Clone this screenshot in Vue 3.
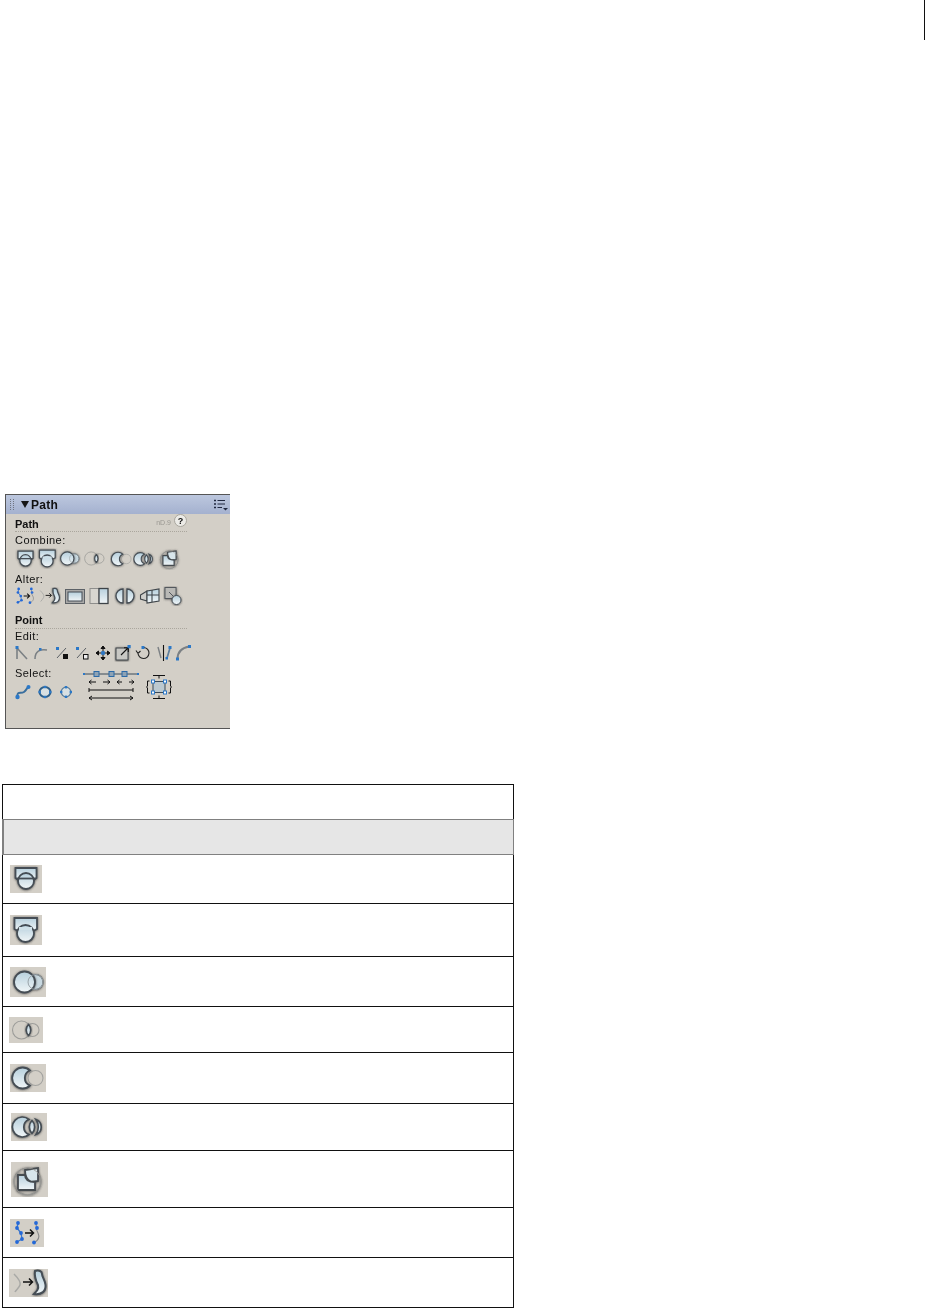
<script setup>
// icon centres measured from the panel
const PANEL_LEFT = 6

const combine = [
  { id: 's1', c: 25, w: 23, h: 20 },
  { id: 's2', c: 47, w: 23, h: 21 },
  { id: 's3', c: 69, w: 23, h: 19 },
  { id: 's4', c: 94, w: 25, h: 19 },
  { id: 's5', c: 121, w: 23, h: 18 },
  { id: 's6', c: 144, w: 23, h: 18 },
  { id: 's7', c: 170, w: 25, h: 23 }
]
const alter = [
  { id: 's8', c: 25, w: 24, h: 20 },
  { id: 's9', c: 49, w: 24, h: 18 },
  { id: 'a3', c: 75, w: 22, h: 17 },
  { id: 'a4', c: 99, w: 22, h: 18 },
  { id: 'a5', c: 125, w: 22, h: 20 },
  { id: 'a6', c: 150, w: 22, h: 18 },
  { id: 'a7', c: 173, w: 20, h: 20 }
]
const edit = [
  { id: 'e1', c: 22, w: 16, h: 16 },
  { id: 'e2', c: 41, w: 16, h: 16 },
  { id: 'e3', c: 62, w: 16, h: 16 },
  { id: 'e4', c: 82, w: 16, h: 16 },
  { id: 'e5', c: 103, w: 16, h: 16 },
  { id: 'e6', c: 123, w: 18, h: 18 },
  { id: 'e7', c: 143, w: 16, h: 16 },
  { id: 'e8', c: 164, w: 16, h: 16 },
  { id: 'e9', c: 183, w: 18, h: 18 }
]
const select = [
  { id: 'p1', c: 23, w: 18, h: 16 },
  { id: 'p2', c: 45, w: 16, h: 16 },
  { id: 'p3', c: 66, w: 16, h: 16 }
]

function spaced(list) {
  let right = PANEL_LEFT
  return list.map((icon) => {
    const left = icon.c - icon.w / 2
    const item = { ...icon, ml: left - right }
    right = left + icon.w
    return item
  })
}

const rows = [
  { h: 49, id: 's1', x: 10, w: 32, h2: 28 },
  { h: 53, id: 's2', x: 10, w: 32, h2: 30 },
  { h: 50, id: 's3', x: 10, w: 36, h2: 30 },
  { h: 46, id: 's4', x: 9, w: 34, h2: 26 },
  { h: 51, id: 's5', x: 10, w: 36, h2: 28 },
  { h: 47, id: 's6', x: 11, w: 36, h2: 28 },
  { h: 57, id: 's7', x: 11, w: 37, h2: 35 },
  { h: 50, id: 's8', x: 10, w: 34, h2: 28 },
  { h: 50, id: 's9', x: 9, w: 39, h2: 28 }
]
</script>

<template>
  <div class="page">
    <div class="page-mark"></div>

    <svg class="defs" aria-hidden="true">
      <defs>
        <linearGradient id="glass" x1="0" y1="0" x2="0" y2="1">
          <stop offset="0" stop-color="#b7d0dd" />
          <stop offset="1" stop-color="#f1f6f8" />
        </linearGradient>
        <filter id="soft" x="-30%" y="-30%" width="160%" height="160%">
          <feDropShadow dx="0" dy="0.4" stdDeviation="1.3" flood-color="#3a3a3a" flood-opacity="0.85" />
        </filter>
      </defs>

      <symbol id="s1" viewBox="0 0 32 28">
        <g filter="url(#soft)" stroke="#454d54" stroke-width="1.8" fill="url(#glass)">
          <path d="M5.5 3H26.5V13L23.5 15H8.5L5.5 13Z" />
          <circle cx="16" cy="16" r="8" />
          <path d="M6 13.5H26" fill="none" />
        </g>
      </symbol>
      <symbol id="s2" viewBox="0 0 32 30">
        <g filter="url(#soft)" stroke="#454d54" stroke-width="1.8" fill="url(#glass)">
          <path d="M4.5 3H27V14L23 16H8L4.5 14Z" />
          <circle cx="15.5" cy="18.5" r="8.5" />
        </g>
        <path d="M9 12H22V15H9Z" fill="#cfe0e8" />
      </symbol>
      <symbol id="s3" viewBox="0 0 36 30">
        <circle cx="25.5" cy="15" r="7.5" fill="#c8d8e0" stroke="#555c62" stroke-width="1.2" filter="url(#soft)" />
        <circle cx="14.5" cy="15" r="10.5" fill="url(#glass)" stroke="#454d54" stroke-width="1.8" filter="url(#soft)" />
        <circle cx="25.5" cy="15" r="7.5" fill="none" stroke="#9aa3a8" stroke-width="1" />
      </symbol>
      <symbol id="s4" viewBox="0 0 34 26">
        <circle cx="12.5" cy="13" r="9" fill="none" stroke="#9d9d9a" stroke-width="1.1" />
        <circle cx="23.5" cy="13" r="6.5" fill="none" stroke="#9d9d9a" stroke-width="1.1" />
        <path d="M19.5 7.5C16.5 10.5 16.5 15.5 19.5 18.5C22.5 15.5 22.5 10.5 19.5 7.5Z" fill="url(#glass)" stroke="#454d54" stroke-width="1.6" filter="url(#soft)" />
      </symbol>
      <symbol id="s5" viewBox="0 0 36 28">
        <circle cx="25.5" cy="14" r="7.5" fill="none" stroke="#a3a3a0" stroke-width="1.1" />
        <path d="M20 6.5A10.5 10.5 0 1 0 20 21.5A8 8 0 0 1 20 6.5Z" fill="url(#glass)" stroke="#454d54" stroke-width="1.8" filter="url(#soft)" />
      </symbol>
      <symbol id="s6" viewBox="0 0 36 28">
        <g fill="url(#glass)" stroke="#454d54" stroke-width="1.7" filter="url(#soft)">
          <path d="M18 6.5A10 10 0 1 0 18 21.5A8 8 0 0 1 18 6.5Z" />
          <path d="M21 7.5C17.5 11 17.5 17 21 20.5C24.5 17 24.5 11 21 7.5Z" />
          <path d="M25 6.5A8 8 0 0 1 25 21.5C28 17 28 11 25 6.5Z" />
        </g>
      </symbol>
      <symbol id="s7" viewBox="0 0 37 35">
        <circle cx="16.5" cy="19.5" r="13.5" fill="none" stroke="#8f8f8c" stroke-width="1.2" filter="url(#soft)" />
        <g stroke="#454b50" stroke-width="1.8" filter="url(#soft)">
          <path d="M14 8L27 6V19L20 20C16 18 14 14 14 8Z" fill="#d8e6ec" />
          <path d="M7 13H14C14 17 17 20 24 20V28H7Z" fill="url(#glass)" />
        </g>
        <circle cx="16.5" cy="19.5" r="13.5" fill="none" stroke="#9a9a97" stroke-width="0.8" />
      </symbol>
      <symbol id="s8" viewBox="0 0 34 28">
        <path d="M8 4L7 9L11 14L12 20L7 23" fill="none" stroke="#3f78c8" stroke-width="1.3" />
        <path d="M26 4C27 8 25 10 28 14C30 18 29 21 24 24" fill="none" stroke="#8a8a8a" stroke-width="1.1" />
        <g fill="#2368d8">
          <circle cx="8" cy="4" r="1.9" /><circle cx="7" cy="9" r="1.9" /><circle cx="11" cy="14" r="1.9" />
          <circle cx="12" cy="20" r="1.9" /><circle cx="7" cy="23" r="1.9" />
          <circle cx="26" cy="4" r="1.9" /><circle cx="27" cy="9" r="1.9" /><circle cx="24" cy="23.5" r="1.9" />
        </g>
        <path d="M15 14H23M20 10.5L23.5 14L20 17.5" fill="none" stroke="#111" stroke-width="1.5" />
      </symbol>
      <symbol id="s9" viewBox="0 0 39 28">
        <path d="M5 5C10 10 12 13 11 16C10 19 7 21 6 23" fill="none" stroke="#a9a9a6" stroke-width="1.5" />
        <path d="M14 13H23M20 9.5L23.5 13L20 16.5" fill="none" stroke="#111" stroke-width="1.5" />
        <path d="M26 2C30 1 33 2 33 5C33 8 36 11 36.5 16C37 22 33 26 25 25C28 22 30 20 29 16C27 12 25 8 26 2Z" fill="url(#glass)" stroke="#454d54" stroke-width="2" filter="url(#soft)" />
      </symbol>

      <symbol id="a3" viewBox="0 0 22 17">
        <rect x="1.5" y="1.5" width="19" height="14" fill="#a9a9a8" stroke="#5c6166" />
        <rect x="4" y="4" width="14" height="9" fill="url(#glass)" stroke="#454d54" />
      </symbol>
      <symbol id="a4" viewBox="0 0 22 18">
        <rect x="2" y="1.5" width="9" height="15" fill="#d8d6d0" stroke="#8e8e8c" />
        <rect x="11" y="1.5" width="9" height="15" fill="url(#glass)" stroke="#3d4348" stroke-width="1.3" />
      </symbol>
      <symbol id="a5" viewBox="0 0 22 20">
        <g fill="url(#glass)" stroke="#454d54" stroke-width="1.3" filter="url(#soft)">
          <path d="M9 3A7 7 0 0 0 9 17Z" />
          <path d="M13 3A7 7 0 0 1 13 17Z" />
        </g>
      </symbol>
      <symbol id="a6" viewBox="0 0 22 18">
        <g fill="url(#glass)" stroke="#3f454a" stroke-width="1.1">
          <path d="M1.5 8L8 4V14L1.5 12Z" fill="#cfcfcc" />
          <path d="M8 4L20 2V14L8 16Z" />
          <path d="M8 8H20M13 3V15" fill="none" />
        </g>
      </symbol>
      <symbol id="a7" viewBox="0 0 20 20">
        <rect x="2" y="1.5" width="11" height="11" fill="#b9b9b6" stroke="#53585d" filter="url(#soft)" />
        <path d="M6 6L12 12" stroke="#53585d" />
        <circle cx="13.5" cy="14" r="4.5" fill="url(#glass)" stroke="#454d54" filter="url(#soft)" />
      </symbol>

      <symbol id="e1" viewBox="0 0 16 16">
        <path d="M3 14V3L13 14" fill="none" stroke="#7b8084" stroke-width="1.6" />
        <rect x="1.5" y="1" width="3" height="3" fill="#2b78c8" />
      </symbol>
      <symbol id="e2" viewBox="0 0 16 16">
        <path d="M2 14C2 6 7 4 14 5" fill="none" stroke="#7b8084" stroke-width="1.6" />
        <rect x="6" y="3" width="2.5" height="2.5" fill="#2b78c8" />
      </symbol>
      <symbol id="e3" viewBox="0 0 16 16">
        <path d="M3 13L12 3" stroke="#5b6065" stroke-width="1" />
        <rect x="2" y="2" width="3" height="3" fill="#2b78c8" />
        <rect x="9" y="9" width="5" height="5" fill="#111" />
      </symbol>
      <symbol id="e4" viewBox="0 0 16 16">
        <path d="M3 13L12 3" stroke="#5b6065" stroke-width="1" />
        <rect x="2" y="2" width="3" height="3" fill="#2b78c8" />
        <rect x="9.5" y="9.5" width="4.5" height="4.5" fill="#eee" stroke="#111" />
      </symbol>
      <symbol id="e5" viewBox="0 0 16 16">
        <path d="M8 1V15M1 8H15M8 1L6 3.5H10ZM8 15L6 12.5H10ZM1 8L3.5 6V10ZM15 8L12.5 6V10Z" stroke="#111" fill="#111" stroke-width="1" />
        <rect x="6.2" y="6.2" width="3.6" height="3.6" fill="#2b78c8" />
      </symbol>
      <symbol id="e6" viewBox="0 0 18 18">
        <rect x="2" y="4" width="12" height="12" fill="#c8c8c4" stroke="#3f4448" filter="url(#soft)" />
        <path d="M7 11L14 4M10 3.8H14.3V8" fill="none" stroke="#111" stroke-width="1.1" />
        <rect x="13.5" y="1" width="3.2" height="3.2" fill="#2b78c8" />
      </symbol>
      <symbol id="e7" viewBox="0 0 16 16">
        <path d="M9 2.5A5.5 5.5 0 1 1 3 8M1 5.5L3 8.5L5.5 6" fill="none" stroke="#222" stroke-width="1.1" />
        <rect x="6.5" y="1" width="3" height="3" fill="#2b78c8" />
      </symbol>
      <symbol id="e8" viewBox="0 0 16 16">
        <path d="M2 2L5 13" stroke="#7b8084" stroke-width="1.4" />
        <path d="M7.5 0V16" stroke="#111" stroke-width="1.1" />
        <path d="M11 13L14 3" stroke="#5f7e9c" stroke-width="1.7" />
        <rect x="12.5" y="1" width="3" height="3" fill="#2b78c8" />
        <rect x="9.5" y="12" width="2.5" height="2.5" fill="#2b78c8" />
      </symbol>
      <symbol id="e9" viewBox="0 0 18 18">
        <path d="M3.5 15C3.5 8 7 4 15 2.5" fill="none" stroke="#7b8084" stroke-width="1.9" />
        <rect x="2" y="13.5" width="3" height="3" fill="#2b78c8" />
        <rect x="14" y="1" width="3" height="3" fill="#2b78c8" />
      </symbol>

      <symbol id="p1" viewBox="0 0 18 16">
        <path d="M3.5 12C3 7 7 10 10 8C13 6 12 4 15 3" fill="none" stroke="#3a6f9e" stroke-width="2" />
        <circle cx="3.5" cy="13" r="2.2" fill="#2b78c8" />
        <circle cx="14.5" cy="3" r="2" fill="#2b78c8" />
      </symbol>
      <symbol id="p2" viewBox="0 0 16 16">
        <ellipse cx="8" cy="8" rx="5.5" ry="5" fill="#d8e0e2" stroke="#2f5f88" stroke-width="2" />
        <g fill="#2b78c8">
          <rect x="6.8" y="1.8" width="2.4" height="2.4" /><rect x="6.8" y="11.8" width="2.4" height="2.4" />
          <rect x="1.5" y="6.8" width="2.4" height="2.4" /><rect x="12" y="6.8" width="2.4" height="2.4" />
        </g>
      </symbol>
      <symbol id="p3" viewBox="0 0 16 16">
        <circle cx="8" cy="8" r="4.8" fill="#d8e0e2" stroke="#5b7d98" stroke-width="1.3" />
        <g fill="#2b78c8">
          <rect x="6.8" y="2" width="2.4" height="2.4" /><rect x="6.8" y="11.6" width="2.4" height="2.4" />
          <rect x="2" y="6.8" width="2.4" height="2.4" /><rect x="11.6" y="6.8" width="2.4" height="2.4" />
        </g>
      </symbol>
    </svg>

    <section class="panel">
      <header class="panel-head">
        <svg class="grip" width="5" height="12" viewBox="0 0 5 12">
          <path d="M0.5 0V12M3.5 0V12" stroke="#6f7480" stroke-width="1" stroke-dasharray="1 1" />
        </svg>
        <span class="tri"></span>
        <span class="head-title">Path</span>
        <svg class="menu" width="14" height="12" viewBox="0 0 14 12">
          <path d="M0 1.5H2M0 5H2M0 8.5H2" stroke="#202840" stroke-width="1.4" />
          <path d="M3.5 1.5H11M3.5 5H11M3.5 8.5H8" stroke="#202840" stroke-width="1" />
          <path d="M9 9H14L11.5 11.5Z" fill="#202840" />
        </svg>
      </header>

      <div class="title-row title-path">
        <span class="title">Path</span>
        <span class="version">nD.9</span>
        <span class="help">?</span>
      </div>

      <div class="label label-combine">Combine:</div>
      <div class="icons icons-combine">
        <svg v-for="i in spaced(combine)" :key="i.id" :width="i.w" :height="i.h" :style="{ marginLeft: i.ml + 'px' }"><use :href="'#' + i.id" /></svg>
      </div>

      <div class="label label-alter">Alter:</div>
      <div class="icons icons-alter">
        <svg v-for="i in spaced(alter)" :key="i.id" :width="i.w" :height="i.h" :style="{ marginLeft: i.ml + 'px' }"><use :href="'#' + i.id" /></svg>
      </div>

      <div class="title-row title-point">
        <span class="title">Point</span>
      </div>

      <div class="label">Edit:</div>
      <div class="icons icons-edit">
        <svg v-for="i in spaced(edit)" :key="i.id" :width="i.w" :height="i.h" :style="{ marginLeft: i.ml + 'px' }"><use :href="'#' + i.id" /></svg>
      </div>

      <div class="select-row">
        <div class="select-col">
          <div class="label label-select">Select:</div>
          <div class="icons icons-select">
            <svg v-for="i in spaced(select)" :key="i.id" :width="i.w" :height="i.h" :style="{ marginLeft: i.ml + 'px' }"><use :href="'#' + i.id" /></svg>
          </div>
        </div>

        <svg class="spacing" width="56" height="30" viewBox="0 0 56 30">
          <path d="M1 3H55" stroke="#3a4a58" stroke-width="1" />
          <g fill="#8fa3b4" stroke="#2b6aa8">
            <rect x="11" y="0.5" width="5" height="5" /><rect x="26" y="0.5" width="5" height="5" /><rect x="39" y="0.5" width="5" height="5" />
          </g>
          <g fill="#2b78c8">
            <rect x="0" y="2" width="2" height="2" /><rect x="54" y="2" width="2" height="2" />
          </g>
          <path d="M6 11H13M6 11L8.5 9M6 11L8.5 13M20 11H27M27 11L24.5 9M27 11L24.5 13M34 11H39M34 11L36.5 9M34 11L36.5 13M46 11H51M51 11L48.5 9M51 11L48.5 13" fill="none" stroke="#111" stroke-width="1" />
          <path d="M6 19H50M6 17V21M50 17V21" fill="none" stroke="#111" stroke-width="1" />
          <path d="M6 27H50M6 27L9 25M6 27L9 29M50 27L47 25M50 27L47 29" fill="none" stroke="#111" stroke-width="1" />
        </svg>

        <svg class="bracket" width="26" height="24" viewBox="0 0 26 24">
          <path d="M3.5 6H1.5V11L0.5 12L1.5 13V18H3.5M22.5 6H24.5V11L25.5 12L24.5 13V18H22.5M7 0.5H19M13 0.5V3.5M7 23.5H19M13 23.5V20.5" fill="none" stroke="#111" stroke-width="1" />
          <rect x="7" y="6.5" width="12" height="11" fill="#bcc9d0" stroke="#3a4a58" />
          <g fill="#fff" stroke="#2b78c8">
            <rect x="5.5" y="5" width="3" height="3" /><rect x="17.5" y="5" width="3" height="3" />
            <rect x="5.5" y="16" width="3" height="3" /><rect x="17.5" y="16" width="3" height="3" />
          </g>
        </svg>
      </div>
    </section>

    <div class="table">
      <div class="row row-head"></div>
      <div class="row row-sub"></div>
      <div
        v-for="r in rows"
        :key="r.id"
        class="row"
        :style="{ height: r.h + 'px', paddingLeft: r.x - 3 + 'px' }"
      >
        <svg class="cell-icon" :width="r.w" :height="r.h2"><use :href="'#' + r.id" /></svg>
      </div>
    </div>
  </div>
</template>

<style scoped>
.page {
  position: relative;
  width: 925px;
  height: 1308px;
  background: #fff;
  overflow: hidden;
  font-family: "Liberation Sans", Arial, sans-serif;
}

.page-mark {
  width: 1px;
  height: 40px;
  margin-left: 924px;
  background: #111;
}

.defs {
  position: absolute;
  width: 0;
  height: 0;
}

.panel {
  box-sizing: border-box;
  width: 225px;
  height: 235px;
  margin: 454px 0 0 5px;
  background: #d3cfc7;
  border-top: 1px solid #555;
  border-bottom: 1px solid #555;
  border-left: 1px solid #555;
  color: #111;
  filter: blur(0.4px);
}

.panel-head {
  display: flex;
  align-items: center;
  height: 19px;
  padding-left: 4px;
  background: linear-gradient(#bcc7de, #a4b1cf);
}

.grip {
  margin-right: 6px;
}

.tri {
  width: 0;
  height: 0;
  border-left: 4.5px solid transparent;
  border-right: 4.5px solid transparent;
  border-top: 7px solid #161616;
}

.head-title {
  margin-left: 2px;
  font-size: 12px;
  font-weight: 700;
  letter-spacing: 0.3px;
}

.menu {
  margin-left: auto;
  margin-right: 2px;
}

.title-row {
  display: flex;
  align-items: center;
  height: 16px;
  margin-left: 9px;
  width: 172px;
  border-bottom: 1px dotted #aaa69d;
}

.title-path {
  height: 17px;
}

.title-path .title {
  margin-top: 2px;
}

.title-point {
  margin-top: 7px;
}

.title {
  font-size: 11px;
  font-weight: 700;
}

.version {
  margin-left: auto;
  font-size: 7px;
  color: #9a9892;
}

.help {
  display: flex;
  align-items: center;
  justify-content: center;
  box-sizing: border-box;
  width: 13px;
  height: 13px;
  margin: 0 0 4px 3px;
  border-radius: 50%;
  background: #ecebe7;
  border: 1px solid #a9a69e;
  font-size: 9px;
  font-weight: 700;
}

.label {
  height: 15px;
  margin-left: 9px;
  font-size: 11px;
  line-height: 15px;
  letter-spacing: 0.45px;
}

.label-combine {
  margin-top: 1px;
}

.label-alter {
  margin-top: 3px;
}

.icons {
  display: flex;
  align-items: center;
}

.icons svg {
  flex: none;
  display: block;
}

.icons-combine {
  height: 21px;
}

.icons-alter {
  height: 18px;
}

.icons-edit {
  height: 18px;
}

.select-row {
  display: flex;
  margin-top: 2px;
}

.select-col {
  width: 77px;
}

.label-select {
  margin-top: 2px;
}

.icons-select {
  margin-top: 2px;
  height: 18px;
}

.spacing {
  flex: none;
  margin-top: 7px;
}

.bracket {
  flex: none;
  margin: 11px 0 0 7px;
}

.table {
  box-sizing: border-box;
  width: 512px;
  margin: 55px 0 0 2px;
}

.row {
  box-sizing: border-box;
  display: flex;
  align-items: center;
  border: 1px solid #111;
  border-top: 0;
}

.row-head {
  height: 35px;
  border-top: 1px solid #111;
  border-bottom: 0;
}

.row-sub {
  height: 36px;
  background: #e6e6e6;
  border: 1px solid #808080;
  border-left-width: 2px;
}

.cell-icon {
  display: block;
  background: #d3cfc7;
  filter: blur(0.6px);
}
</style>
